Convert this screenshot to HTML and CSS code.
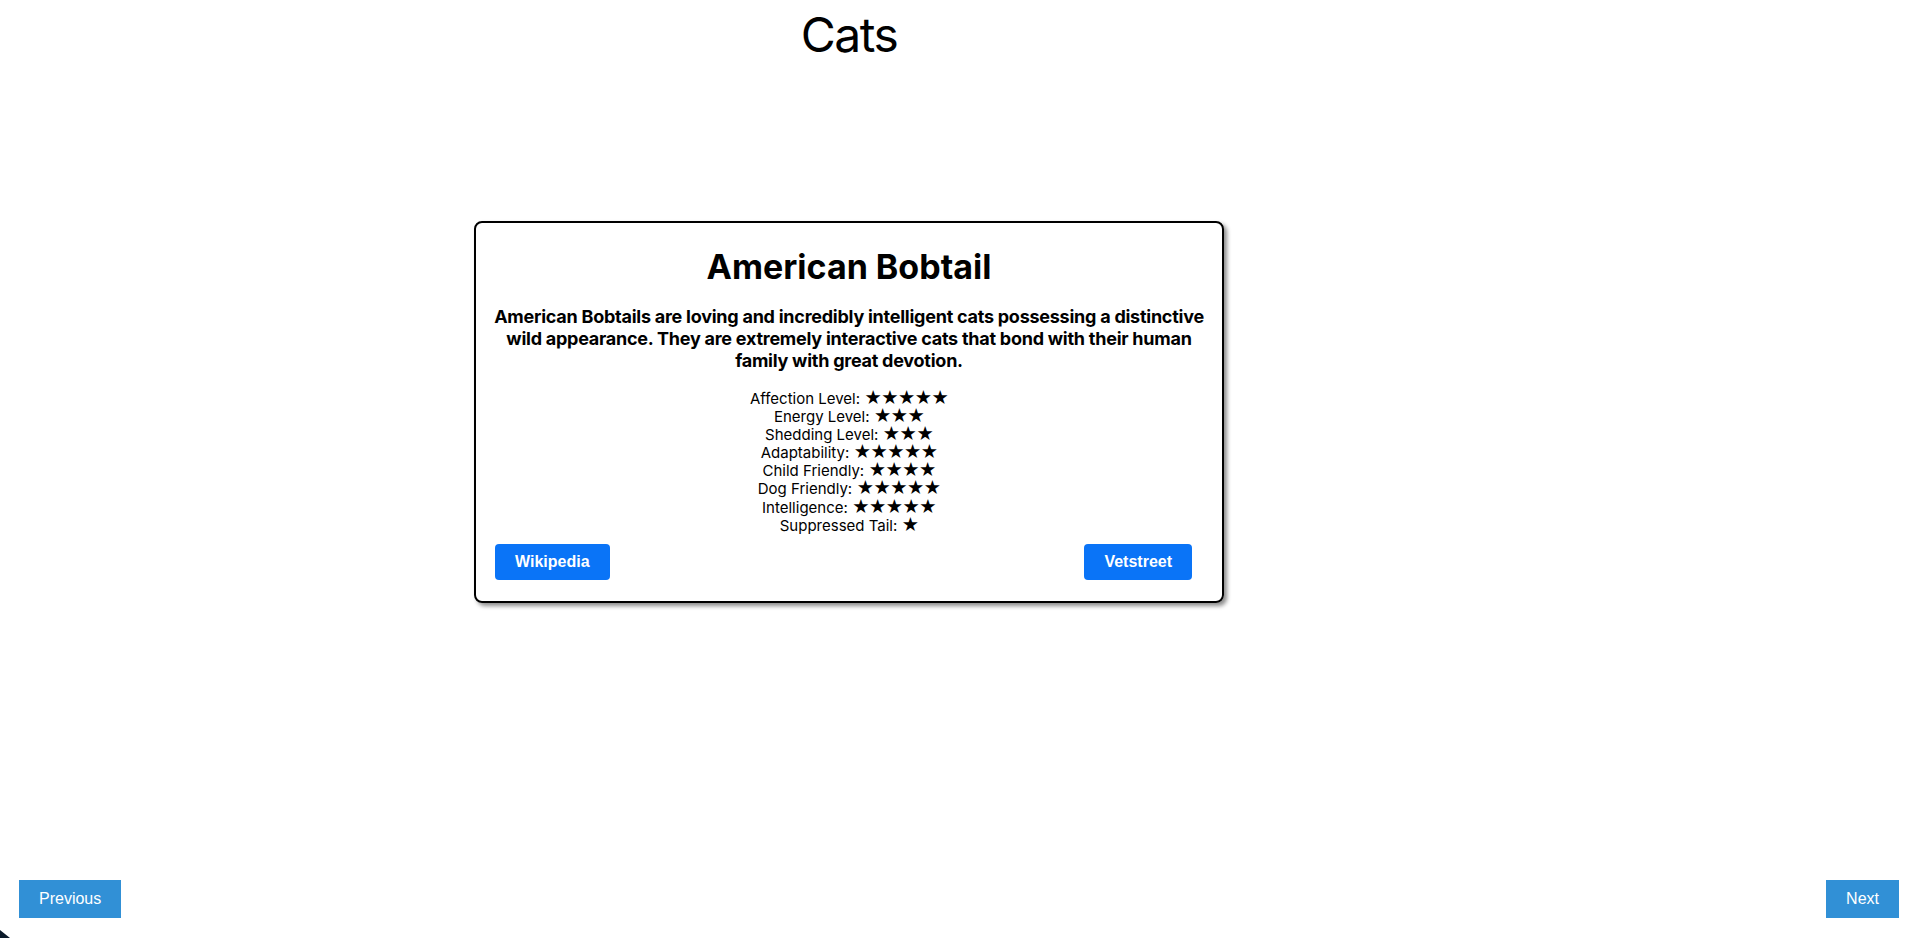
FILE: index.html
```html
<!DOCTYPE html>
<html lang="en">
<head>
<meta charset="utf-8">
<title>Cats</title>
<link rel="stylesheet" href="styles.css">
</head>
<body>
<div class="page">
  <main class="content">
    <h1 class="title">Cats</h1>
    <section class="card">
      <h2 class="breed">American Bobtail</h2>
      <p class="desc">American Bobtails are loving and incredibly intelligent cats possessing a distinctive wild appearance. They are extremely interactive cats that bond with their human family with great devotion.</p>
      <ul class="stats">
        <li>Affection Level: <span class="stars">★★★★★</span></li>
        <li>Energy Level: <span class="stars">★★★</span></li>
        <li>Shedding Level: <span class="stars">★★★</span></li>
        <li>Adaptability: <span class="stars">★★★★★</span></li>
        <li>Child Friendly: <span class="stars">★★★★</span></li>
        <li>Dog Friendly: <span class="stars">★★★★★</span></li>
        <li>Intelligence: <span class="stars">★★★★★</span></li>
        <li>Suppressed Tail: <span class="stars">★</span></li>
      </ul>
      <div class="links">
        <a class="link-btn" href="#">Wikipedia</a>
        <a class="link-btn" href="#">Vetstreet</a>
      </div>
    </section>
  </main>
  <nav class="pager">
    <button class="pager-btn">Previous</button>
    <button class="pager-btn">Next</button>
  </nav>
  <div class="corner"></div>
</div>
</body>
</html>
```

FILE: styles.css
```css
* { box-sizing: border-box; }
html, body { margin: 0; padding: 0; background: #fff; }
body { font-family: Inter, "Noto Sans", sans-serif; color: #000; }

.page {
  height: 100vh;
  display: flex;
  flex-direction: column;
  position: relative;
  overflow: hidden;
}

.content {
  width: 1698px;
  flex: 1;
  display: flex;
  flex-direction: column;
  align-items: center;
}

.title {
  margin: 0;
  padding-top: 6px;
  font-size: 48px;
  font-weight: 400;
  line-height: 58px;
  letter-spacing: -1.5px;
}

.card {
  margin-top: 157px;
  width: 750px;
  border: 2px solid #000;
  border-radius: 8px;
  box-shadow: 3px 3px 4px rgba(0, 0, 0, 0.45);
  padding: 0 10px 21px;
  text-align: center;
}

.breed {
  margin: 24px 0 0;
  font-size: 34px;
  font-weight: 700;
  line-height: 40px;
}

.desc {
  margin: 19px 0 0;
  font-size: 18px;
  font-weight: 700;
  line-height: 22px;
  letter-spacing: -0.25px;
}

.stats {
  list-style: none;
  margin: 18px 0 0;
  padding: 0;
  font-size: 15px;
  line-height: 18.1px;
}

.stats li {
  height: 18.1px;
}

.stars {
  font-size: 17px;
  line-height: 10px;
  letter-spacing: -1px;
}

.links {
  display: flex;
  justify-content: space-between;
  margin-top: 9px;
  padding: 0 20px 0 9px;
}

.link-btn {
  display: inline-flex;
  align-items: center;
  justify-content: center;
  height: 36px;
  padding: 0 20px;
  background: #0a74f7;
  color: #fff;
  border-radius: 4px;
  text-decoration: none;
  font-family: "Liberation Sans", Arial, sans-serif;
  font-weight: 700;
  font-size: 16px;
}

.pager {
  display: flex;
  justify-content: space-between;
  padding: 0 12px 20px 19px;
}

.pager-btn {
  height: 38px;
  padding: 0 20px;
  border: none;
  background: #3190d6;
  color: #fff;
  font-family: "Liberation Sans", Arial, sans-serif;
  font-size: 16px;
}

.corner {
  position: absolute;
  left: 0;
  bottom: 0;
  width: 10px;
  height: 8px;
  background: #0b1a2a;
  clip-path: polygon(0 0, 0 100%, 100% 100%);
}
```
